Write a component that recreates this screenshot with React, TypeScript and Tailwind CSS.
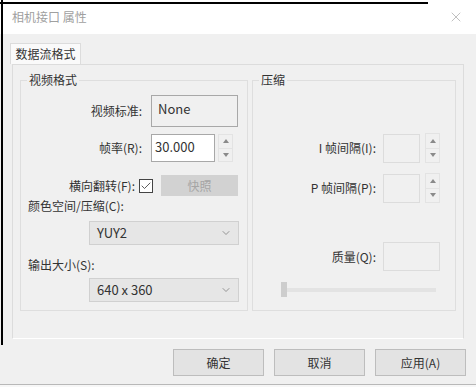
import { Check, X, ChevronDown } from 'lucide-react'

const font = "font-['Noto_Sans_CJK_SC','Noto_Sans',sans-serif]"

function Spinner({ h }: { h: string }) {
  return (
    <div className={`flex w-[15px] flex-col border border-[#e3e3e3] ${h}`}>
      <div className="flex flex-1 items-center justify-center border-b border-[#e3e3e3]">
        <svg width="6" height="4" viewBox="0 0 6 4"><path d="M3 0 L6 4 L0 4 Z" fill="#8a8a8a" /></svg>
      </div>
      <div className="flex flex-1 items-center justify-center">
        <svg width="6" height="4" viewBox="0 0 6 4"><path d="M0 0 L6 0 L3 4 Z" fill="#8a8a8a" /></svg>
      </div>
    </div>
  )
}

function Combo({ value }: { value: string }) {
  return (
    <div className="ml-[68px] flex h-[24px] w-[150px] items-center justify-between border border-[#d0d0d0] bg-[#e6e6e6] pl-[7px] pr-[6px] text-[13px] text-[#333]">
      <span>{value}</span>
      <ChevronDown className="h-3 w-3 text-[#777]" strokeWidth={1.5} />
    </div>
  )
}

function Button({ label }: { label: string }) {
  return (
    <button className="flex h-[27px] w-[91px] items-center justify-center border border-[#bdbdbd] bg-[#e3e3e3] text-[12px] text-[#333]">
      {label}
    </button>
  )
}

export default function App() {
  return (
    <div className={`relative flex h-[387px] w-[476px] flex-col overflow-hidden bg-[#f0f0f0] ${font}`}>
      {/* window edge artifacts */}
      <div className="absolute left-0 top-[2px] h-[2px] w-[428px] bg-black" />
      <div className="absolute left-[1px] top-0 h-[345px] w-[2px] bg-black" />

      <div className="flex h-[34px] items-center justify-between bg-white pl-[12px] pr-[12px]">
        <span className="text-[12px] text-[#a0a0a0]">相机接口 属性</span>
        <X className="h-4 w-4 text-[#b0b0b0]" strokeWidth={1.2} />
      </div>

      <div className="flex flex-col pl-[10px] pt-[9px]">
        <div className="flex h-[21px] w-[71px] items-center justify-center border border-b-0 border-[#dcdcdc] bg-[#fafafa] text-[12px] text-[#333]">
          数据流格式
        </div>
        <div className="ml-[2px] flex h-[275px] w-[452px] gap-[4px] border border-[#dcdcdc] border-b-white bg-[#f0f0f0] pl-[7px] pt-[6px]">
          {/* video format group */}
          <fieldset className="h-[240px] w-[228px] border border-[#dedede] pt-[6px]">
            <legend className="ml-[6px] px-[2px] text-[12px] text-[#333]">视频格式</legend>
            <div className="flex items-center gap-[9px]">
              <span className="w-[121px] text-right text-[12px] text-[#333]">视频标准:</span>
              <div className="flex h-[32px] w-[87px] items-start border border-[#a8a8a8] bg-[#f0f0f0] pl-[6px] pt-[3px] text-[13px] text-[#333]">None</div>
            </div>
            <div className="mt-[7px] flex items-center gap-[9px]">
              <span className="w-[121px] text-right text-[12px] text-[#333]">帧率(R):</span>
              <div className="flex h-[28px] w-[64px] items-start border border-[#a8a8a8] bg-white pl-[3px] pt-[2px] text-[13px] text-[#333]">30.000</div>
              <div className="-ml-[6px]"><Spinner h="h-[28px]" /></div>
            </div>
            <div className="mt-[13px] flex items-center">
              <span className="w-[114px] text-right text-[12px] text-[#333]">横向翻转(F):</span>
              <div className="ml-[4px] flex h-[14px] w-[14px] items-center justify-center border border-[#444] bg-white">
                <Check className="h-[12px] w-[12px] text-[#333]" strokeWidth={1.6} />
              </div>
              <div className="ml-[8px] flex h-[21px] w-[77px] items-center justify-center bg-[#d2d2d2] text-[12px] text-[#a5a5a5]">快照</div>
            </div>
            <div className="ml-[7px] mt-[1px] text-[12px] leading-[18px] text-[#333]">颜色空间/压缩(C):</div>
            <div className="mt-[6px]"><Combo value="YUY2" /></div>
            <div className="ml-[7px] mt-[11px] text-[12px] leading-[18px] text-[#333]">输出大小(S):</div>
            <div className="mt-[4px]"><Combo value="640 x 360" /></div>
          </fieldset>

          {/* compression group */}
          <fieldset className="h-[240px] w-[204px] border border-[#dedede]">
            <legend className="ml-[6px] px-[2px] text-[12px] text-[#333]">压缩</legend>
            <div className="mt-[44px] flex items-center">
              <span className="w-[123px] text-right text-[12px] text-[#333]">I 帧间隔(I):</span>
              <div className="ml-[7px] h-[29px] w-[37px] border border-[#dcdcdc]" />
              <div className="ml-[5px]"><Spinner h="h-[30px]" /></div>
            </div>
            <div className="mt-[10px] flex items-center">
              <span className="w-[123px] text-right text-[12px] text-[#333]">P 帧间隔(P):</span>
              <div className="ml-[7px] h-[29px] w-[37px] border border-[#dcdcdc]" />
              <div className="ml-[5px]"><Spinner h="h-[30px]" /></div>
            </div>
            <div className="mt-[39px] flex items-center">
              <span className="w-[123px] text-right text-[12px] text-[#333]">质量(Q):</span>
              <div className="ml-[7px] h-[29px] w-[57px] border border-[#dcdcdc]" />
            </div>
            <div className="ml-[28px] mt-[11px] flex h-[15px] w-[155px] items-center">
              <div className="h-[15px] w-[6px] bg-[#cdcdcd]" />
              <div className="h-[4px] flex-1 bg-[#e3e3e3]" />
            </div>
          </fieldset>
        </div>
      </div>

      <div className="mt-[10px] flex justify-end gap-[10px] pr-[10px]">
        <Button label="确定" />
        <Button label="取消" />
        <Button label="应用(A)" />
      </div>
      <div className="mt-auto h-[3px] border-t border-[#b8b8b8] bg-[#f7f7f7]" />
    </div>
  )
}
